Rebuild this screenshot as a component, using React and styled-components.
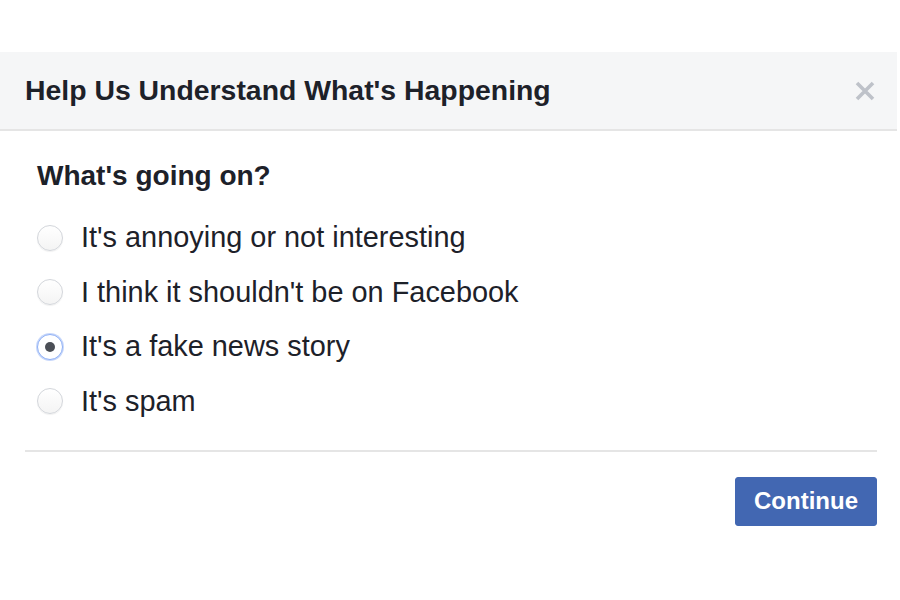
import React, { useState } from 'react';
import styled, { createGlobalStyle } from 'styled-components';

const GlobalStyle = createGlobalStyle`
  html, body {
    margin: 0;
    padding: 0;
    background: #ffffff;
    font-family: "Liberation Sans", Arial, Helvetica, sans-serif;
  }
`;

const options = [
  "It's annoying or not interesting",
  "I think it shouldn't be on Facebook",
  "It's a fake news story",
  "It's spam",
];

const App = () => {
  const [selected, setSelected] = useState(2);

  return (
    <>
      <GlobalStyle />
      <Page>
        <Dialog>
          <Header>
            <Title>Help Us Understand What's Happening</Title>
            <CloseButton aria-label="Close">
              <svg width="22" height="22" viewBox="0 0 22 22">
                <path d="M3 3 L19 19 M19 3 L3 19" stroke="#bec2c9" strokeWidth="3.6" strokeLinecap="butt" />
              </svg>
            </CloseButton>
          </Header>
          <Body>
            <Question>What's going on?</Question>
            <OptionList>
              {options.map((label, i) => (
                <Option key={label} onClick={() => setSelected(i)}>
                  <Radio $checked={selected === i} />
                  <OptionText>{label}</OptionText>
                </Option>
              ))}
            </OptionList>
          </Body>
          <Footer>
            <ContinueButton>Continue</ContinueButton>
          </Footer>
        </Dialog>
      </Page>
    </>
  );
};

export default App;

const Page = styled.div`
  width: 900px;
  height: 600px;
  padding-top: 52px;
  box-sizing: border-box;
  background: #ffffff;
`;

const Dialog = styled.div`
  width: 897px;
  background: #ffffff;
`;

const Header = styled.div`
  height: 77px;
  background: #f5f6f7;
  border-bottom: 2px solid #e5e5e5;
  display: flex;
  align-items: center;
  justify-content: space-between;
  padding: 0 21px 0 25px;
`;

const Title = styled.h1`
  margin: 0;
  font-size: 28.4px;
  font-weight: bold;
  color: #1d2129;
`;

const CloseButton = styled.button`
  border: none;
  background: none;
  padding: 0;
  display: flex;
  cursor: pointer;
`;

const Body = styled.div`
  padding: 29px 25px 0 37px;
`;

const Question = styled.div`
  font-size: 28px;
  line-height: 32px;
  font-weight: bold;
  color: #1d2129;
  margin-bottom: 29px;
`;

const OptionList = styled.div`
  display: flex;
  flex-direction: column;
  gap: 21.5px;
`;

const Option = styled.label`
  display: flex;
  align-items: center;
  gap: 18px;
  height: 33px;
  cursor: pointer;
`;

const Radio = styled.span`
  flex: none;
  width: 26px;
  height: 26px;
  border-radius: 50%;
  box-sizing: border-box;
  border: 1px solid ${p => (p.$checked ? '#8fb0f5' : '#d3d6db')};
  background: ${p => (p.$checked ? '#ffffff' : 'linear-gradient(#ffffff, #f4f4f4)')};
  box-shadow: ${p => (p.$checked ? '0 0 0 1px #c8d8fb' : '0 1px 1px rgba(0,0,0,0.06)')};
  display: flex;
  align-items: center;
  justify-content: center;
  &::after {
    content: '';
    display: ${p => (p.$checked ? 'block' : 'none')};
    width: 10px;
    height: 10px;
    border-radius: 50%;
    background: #4b4f56;
  }
`;

const OptionText = styled.span`
  font-size: 28.9px;
  line-height: 33px;
  color: #1d2129;
`;

const Footer = styled.div`
  margin: 32px 20px 0 25px;
  border-top: 2px solid #e5e5e5;
  padding-top: 25px;
  display: flex;
  justify-content: flex-end;
`;

const ContinueButton = styled.button`
  width: 142px;
  height: 49px;
  background: #4267b2;
  border: 1px solid #4267b2;
  border-radius: 3px;
  color: #ffffff;
  font-family: "Liberation Sans", Arial, Helvetica, sans-serif;
  font-size: 24px;
  font-weight: bold;
  cursor: pointer;
`;
